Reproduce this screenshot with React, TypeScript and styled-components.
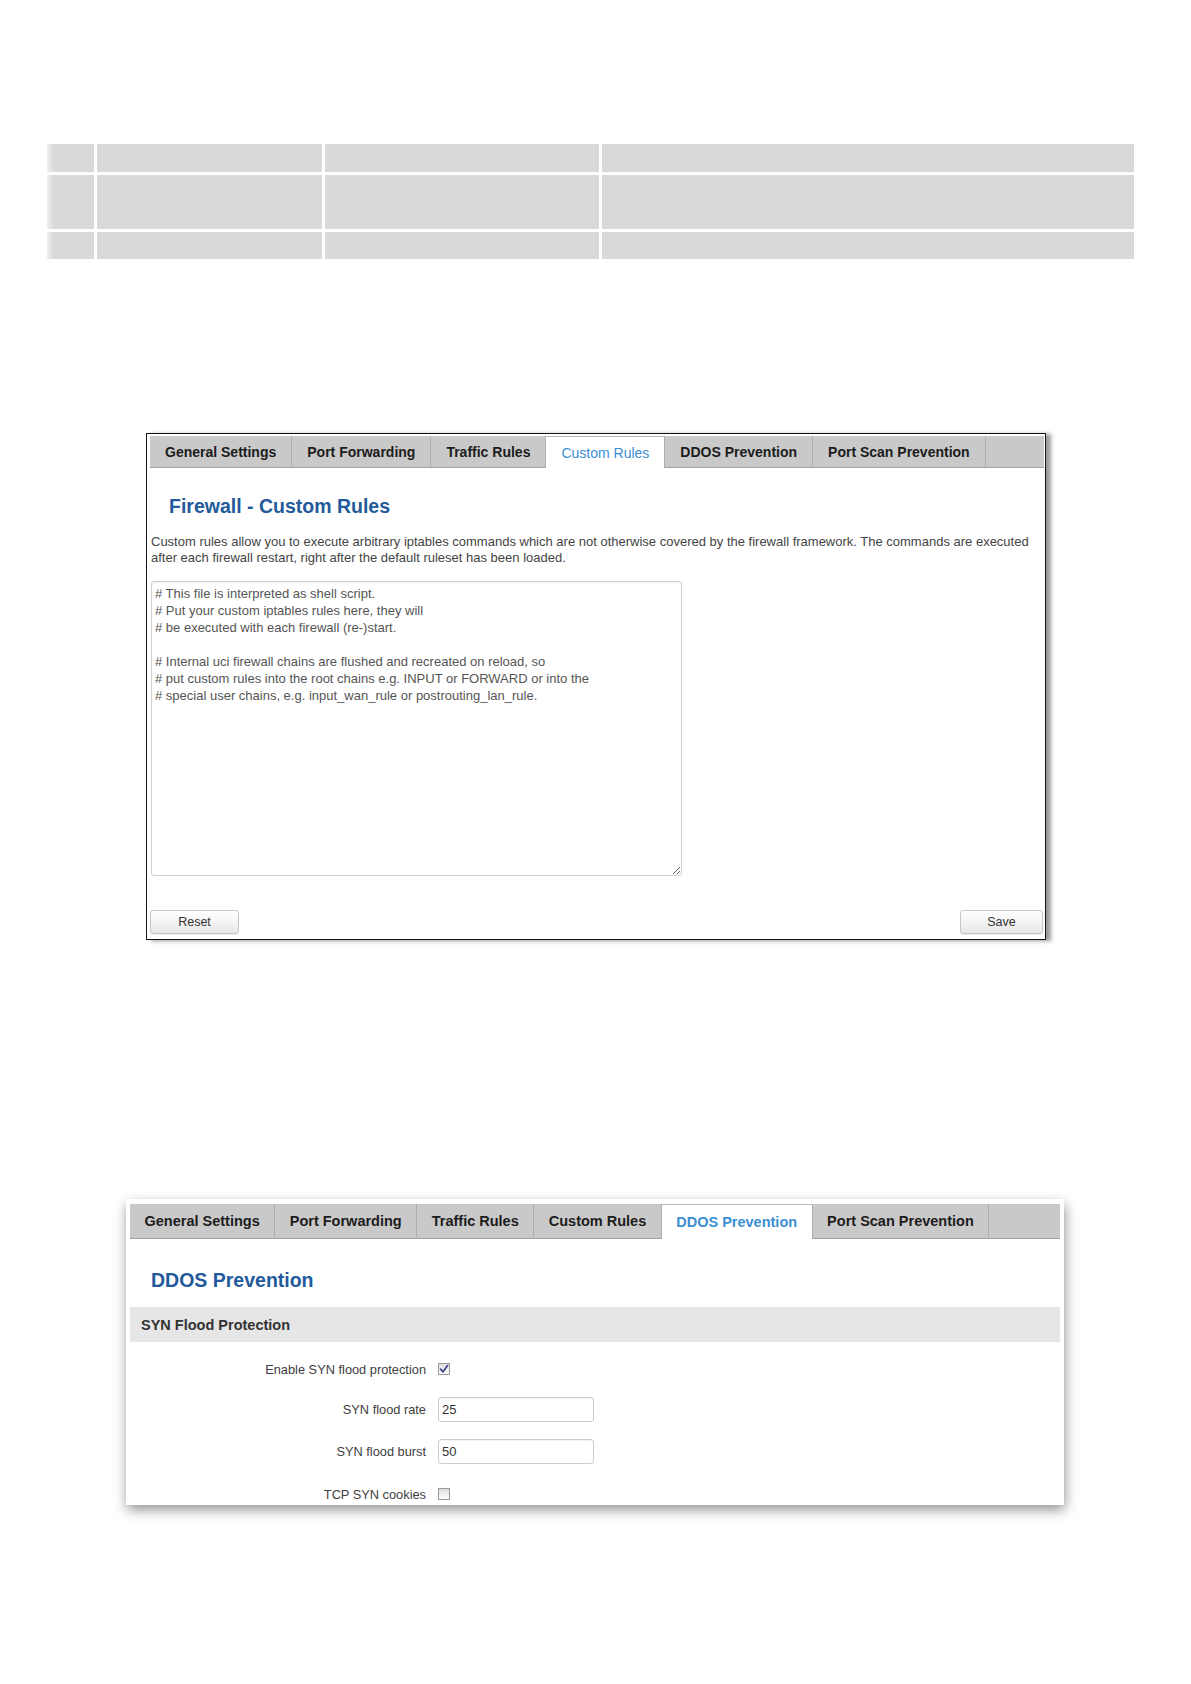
import React from "react";
import styled, { createGlobalStyle, css } from "styled-components";

const GlobalStyle = createGlobalStyle`
  html, body { margin: 0; padding: 0; background: #ffffff; }
  body { font-family: "Liberation Sans", Arial, Helvetica, sans-serif; }
  * { box-sizing: border-box; }
`;

const Page = styled.div`
  width: 1191px;
  min-height: 1684px;
  padding-top: 144px;
  background: #fff;
`;

/* ---------- empty placeholder table at the top ---------- */
const BlankTable = styled.div`
  margin-left: 47px;
  display: grid;
  width: max-content;
  grid-template-columns: 47px 225px 274px 532px;
  grid-template-rows: 28px 54px 27px;
  column-gap: 3px;
  row-gap: 3px;
`;

const BlankCell = styled.div<{ $first?: boolean }>`
  background: #d9d9d9;
  ${(p) =>
    p.$first &&
    css`
      background: linear-gradient(to right, #eeeeee 0px, #d9d9d9 7px);
    `}
`;

/* ---------- screenshot frames ---------- */
const FirewallFrame = styled.section`
  margin: 174px 0 0 146px;
  width: 900px;
  height: 507px;
  border: 1px solid #151515;
  background: #fff;
  padding: 2px 1px 0 3px;
  display: flex;
  flex-direction: column;
  box-shadow: 5px 1px 4px rgba(0, 0, 0, 0.4);
`;

const DdosFrame = styled.section`
  margin: 259px 0 0 126px;
  width: 938px;
  height: 306px;
  background: #fff;
  padding: 5px 4px 0 4px;
  overflow: hidden;
  display: flex;
  flex-direction: column;
  box-shadow: 1px 5px 12px rgba(0, 0, 0, 0.42);
`;

/* ---------- tabs ---------- */
const TabBar = styled.nav<{ $h: number }>`
  display: flex;
  height: ${(p) => p.$h}px;
  flex: none;
  background: #c9c9c9;
  border-bottom: 1px solid #a3a3a3;
`;

const Tab = styled.div<{ $active?: boolean; $size: number; $pad: number; $activeWeight: string }>`
  display: flex;
  align-items: center;
  padding: 0 ${(p) => p.$pad}px;
  font-size: ${(p) => p.$size}px;
  font-weight: bold;
  color: #1c1c1c;
  white-space: nowrap;
  border-right: 1px solid #adadad;
  ${(p) =>
    p.$active &&
    css`
      background: #fff;
      color: #3c8fd3;
      font-weight: ${p.$activeWeight};
      border-top: 1px solid #b8b8b8;
      border-left: 1px solid #b0b0b0;
      margin-left: -1px;
      margin-bottom: -1px;
    `}
`;

/* ---------- headings / text ---------- */
const PageTitle = styled.h2<{ $mt: number; $ml: number }>`
  margin: ${(p) => p.$mt}px 0 0 ${(p) => p.$ml}px;
  font-size: 19.5px;
  line-height: 24px;
  font-weight: bold;
  color: #225a9b;
`;

const Description = styled.p`
  margin: 16px 0 0 1px;
  font-size: 13px;
  line-height: 16px;
  color: #444;
`;

const ScriptBox = styled.textarea`
  margin: 15px 0 0 1px;
  width: 531px;
  height: 295px;
  flex: none;
  padding: 3px 3px;
  border: 1px solid #cfcfcf;
  border-radius: 3px;
  box-shadow: inset 0 1px 2px rgba(0, 0, 0, 0.06);
  font-family: "Liberation Sans", Arial, sans-serif;
  font-size: 13px;
  line-height: 17px;
  color: #555;
  background: #fff;
  resize: both;
  outline: none;
`;

const ButtonRow = styled.div`
  margin-top: 34px;
  display: flex;
  justify-content: space-between;
  padding-right: 1px;
`;

const Button = styled.button<{ $w: number }>`
  width: ${(p) => p.$w}px;
  height: 24px;
  border: 1px solid #c6c6c6;
  border-radius: 3px;
  background: linear-gradient(to bottom, #ffffff 0%, #f3f3f3 55%, #e6e6e6 100%);
  box-shadow: 0 1px 1px rgba(0, 0, 0, 0.08);
  font-family: "Liberation Sans", Arial, sans-serif;
  font-size: 12.5px;
  color: #333;
  padding: 0;
`;

const SectionHeader = styled.h3`
  margin: 15px 0 0 0;
  height: 35px;
  flex: none;
  display: flex;
  align-items: center;
  padding-left: 11px;
  background: #e6e6e6;
  font-size: 14.5px;
  font-weight: bold;
  color: #333;
`;

const FormList = styled.div`
  margin-top: 8px;
  display: flex;
  flex-direction: column;
`;

const FormRow = styled.div<{ $h: number }>`
  height: ${(p) => p.$h}px;
  flex: none;
  display: grid;
  grid-template-columns: 296px 160px;
  column-gap: 12px;
  align-items: center;
`;

const FieldLabel = styled.label`
  text-align: right;
  font-size: 12.8px;
  line-height: 15px;
  color: #404040;
`;

const TextField = styled.input`
  width: 156px;
  height: 25px;
  border: 1px solid #cccccc;
  border-radius: 3px;
  padding: 0 3px;
  box-shadow: inset 0 1px 1px rgba(0, 0, 0, 0.06);
  font-family: "Liberation Sans", Arial, sans-serif;
  font-size: 13px;
  color: #333;
  background: #fff;
  outline: none;
`;

const CheckBox = styled.span`
  width: 12px;
  height: 12px;
  display: flex;
  align-items: center;
  justify-content: center;
  border: 1px solid #9a9a9a;
  background: linear-gradient(to bottom, #dcdcdc 0%, #f2f2f2 60%, #fbfbfb 100%);
`;

const Check = ({ checked }: { checked?: boolean }) => (
  <CheckBox>
    {checked && (
      <svg width="10" height="10" viewBox="0 0 10 10">
        <path
          d="M1.6 5.2 L4 7.8 L8.6 1.6"
          fill="none"
          stroke="#3f3f8e"
          strokeWidth="1.7"
          strokeLinecap="round"
          strokeLinejoin="round"
        />
      </svg>
    )}
  </CheckBox>
);

const tabs = [
  "General Settings",
  "Port Forwarding",
  "Traffic Rules",
  "Custom Rules",
  "DDOS Prevention",
  "Port Scan Prevention",
];

const scriptText = `# This file is interpreted as shell script.
# Put your custom iptables rules here, they will
# be executed with each firewall (re-)start.

# Internal uci firewall chains are flushed and recreated on reload, so
# put custom rules into the root chains e.g. INPUT or FORWARD or into the
# special user chains, e.g. input_wan_rule or postrouting_lan_rule.`;

const Tabs = ({
  active,
  h,
  size,
  pad,
  activeWeight,
}: {
  active: string;
  h: number;
  size: number;
  pad: number;
  activeWeight: string;
}) => (
  <TabBar $h={h}>
    {tabs.map((t) => (
      <Tab key={t} $active={t === active} $size={size} $pad={pad} $activeWeight={activeWeight}>
        {t}
      </Tab>
    ))}
  </TabBar>
);

export default function App() {
  return (
    <Page>
      <GlobalStyle />
      <BlankTable>
        {Array.from({ length: 12 }).map((_, i) => (
          <BlankCell key={i} $first={i % 4 === 0} />
        ))}
      </BlankTable>

      <FirewallFrame>
        <Tabs active="Custom Rules" h={32} size={14} pad={15} activeWeight="normal" />
        <PageTitle $mt={26} $ml={19}>
          Firewall - Custom Rules
        </PageTitle>
        <Description>
          Custom rules allow you to execute arbitrary iptables commands which are not otherwise covered by the firewall framework. The commands are executed
          <br />
          after each firewall restart, right after the default ruleset has been loaded.
        </Description>
        <ScriptBox readOnly defaultValue={scriptText} spellCheck={false} />
        <ButtonRow>
          <Button $w={89}>Reset</Button>
          <Button $w={83}>Save</Button>
        </ButtonRow>
      </FirewallFrame>

      <DdosFrame>
        <Tabs active="DDOS Prevention" h={35} size={14.5} pad={14.5} activeWeight="bold" />
        <PageTitle $mt={29} $ml={21}>
          DDOS Prevention
        </PageTitle>
        <SectionHeader>SYN Flood Protection</SectionHeader>
        <FormList>
          <FormRow $h={38}>
            <FieldLabel>Enable SYN flood protection</FieldLabel>
            <Check checked />
          </FormRow>
          <FormRow $h={42}>
            <FieldLabel>SYN flood rate</FieldLabel>
            <TextField readOnly defaultValue="25" />
          </FormRow>
          <FormRow $h={42}>
            <FieldLabel>SYN flood burst</FieldLabel>
            <TextField readOnly defaultValue="50" />
          </FormRow>
          <FormRow $h={44}>
            <FieldLabel>TCP SYN cookies</FieldLabel>
            <Check />
          </FormRow>
        </FormList>
      </DdosFrame>
    </Page>
  );
}
